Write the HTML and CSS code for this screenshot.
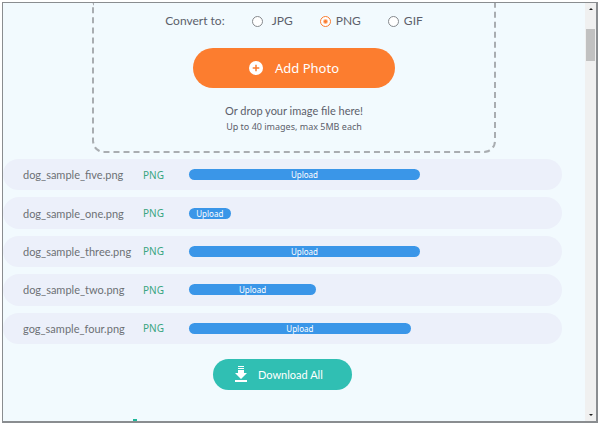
FILE: index.html
```html
<!DOCTYPE html>
<html lang="en">
<head>
<meta charset="UTF-8">
<meta name="viewport" content="width=device-width, initial-scale=1.0">
<title>Image Converter</title>
<link rel="stylesheet" href="styles.css">
</head>
<body>

<div class="window">
    <main class="page">
        <form class="drop-zone">
            <fieldset class="formats">
                <legend class="formats-title">Convert to:</legend>
                <label class="format format-wide"><input type="radio" name="format" value="jpg">JPG</label>
                <label class="format"><input type="radio" name="format" value="png" checked>PNG</label>
                <label class="format"><input type="radio" name="format" value="gif">GIF</label>
            </fieldset>
            <button type="button" class="btn-add">
                <svg width="14" height="14" viewBox="0 0 14 14" aria-hidden="true">
                    <circle cx="7" cy="7" r="7" fill="#fff"/>
                    <path d="M7 3.7v6.6M3.7 7h6.6" stroke="#fc7d2f" stroke-width="1.5"/>
                </svg>
                Add Photo
            </button>
            <p class="drop-text">Or drop your image file here!</p>
            <p class="drop-limit">Up to 40 images, max 5MB each</p>
        </form>

        <section class="results">
            <ul class="files">
                <li class="file">
                    <span class="file-name">dog_sample_five.png</span>
                    <span class="file-type">PNG</span>
                    <div class="track"><div class="bar" style="width: 100%">Upload</div></div>
                </li>
                <li class="file">
                    <span class="file-name">dog_sample_one.png</span>
                    <span class="file-type">PNG</span>
                    <div class="track"><div class="bar" style="width: 18%">Upload</div></div>
                </li>
                <li class="file">
                    <span class="file-name">dog_sample_three.png</span>
                    <span class="file-type">PNG</span>
                    <div class="track"><div class="bar" style="width: 100%">Upload</div></div>
                </li>
                <li class="file">
                    <span class="file-name">dog_sample_two.png</span>
                    <span class="file-type">PNG</span>
                    <div class="track"><div class="bar" style="width: 55%">Upload</div></div>
                </li>
                <li class="file">
                    <span class="file-name">gog_sample_four.png</span>
                    <span class="file-type">PNG</span>
                    <div class="track"><div class="bar" style="width: 96%">Upload</div></div>
                </li>
            </ul>

            <button type="button" class="btn-download">
                <svg width="12" height="17" viewBox="0 0 12 17" aria-hidden="true">
                    <path d="M3 0h6v1H3zM3 2h6v1H3zM3 4h6v3h3l-6 6-6-6h3zM0 14h12v2H0z" fill="#fff"/>
                </svg>
                Download All
            </button>
        </section>

        <div class="next-section"></div>
    </main>

    <div class="scrollbar">
        <button type="button" class="scroll-btn" aria-label="Scroll up">
            <svg width="4" height="2" viewBox="0 0 4 2"><path d="M2 0l2 2H0z" fill="#222"/></svg>
        </button>
        <div class="scroll-thumb"></div>
        <button type="button" class="scroll-btn scroll-down" aria-label="Scroll down">
            <svg width="4" height="2" viewBox="0 0 4 2"><path d="M2 2l2-2H0z" fill="#222"/></svg>
        </button>
    </div>
</div>

</body>
</html>
```
FILE: styles.css
```css
* {
    box-sizing: border-box;
}
body {
    margin: 0;
    padding: 2px;
    height: 100vh;
    background-color: #fff;
    font-family: Lato, "Noto Sans", sans-serif;
    color: #5c5f6b;
}
button {
    border: none;
    padding: 0;
    font-family: inherit;
    color: #fff;
    cursor: pointer;
}
.window {
    display: flex;
    height: 100%;
    border: 1px solid #8a8d90;
    border-right: 2px solid #8a8d90;
    border-bottom: 2px solid #8a8d90;
    background-color: #f2fafe;
}
.page {
    flex: 1;
    display: flex;
    flex-direction: column;
    align-items: center;
}
/* the top edge of the drop area is scrolled out of view */
.drop-zone {
    display: flex;
    flex-direction: column;
    align-items: center;
    width: 69%;
    min-width: 404px;
    height: 150px;
    padding-top: 10px;
    border: 2px dashed #a9adb1;
    border-top: none;
    border-radius: 0 0 12px 12px;
}
.formats {
    display: flex;
    align-items: center;
    margin: 0;
    padding: 0;
    border: none;
    font-size: 12px;
    line-height: 16px;
}
.formats-title {
    float: left;
    padding: 0;
    margin-right: 27px;
}
.format {
    display: flex;
    align-items: center;
    gap: 5px;
    margin-right: 27px;
}
.format:last-child {
    margin-right: 0;
}
.format-wide {
    gap: 9px;
}
.format input {
    appearance: none;
    width: 11px;
    height: 11px;
    margin: 0;
    border: 1px solid #85898d;
    border-radius: 50%;
    background-color: #fff;
}
.format input:checked {
    border-color: #fc7d2f;
    background: radial-gradient(circle, #fc7d2f 1px, #fff 3px);
}
.btn-add {
    display: flex;
    align-items: center;
    justify-content: center;
    gap: 12px;
    width: 202px;
    height: 40px;
    margin-top: 19px;
    border-radius: 20px;
    background-color: #fc7d2f;
    font-family: "Noto Sans", sans-serif;
    font-size: 13px;
}
.drop-text {
    margin: 15px 0 0;
    font-size: 11px;
    line-height: 16px;
}
.drop-limit {
    margin: 0;
    font-family: "Noto Sans", sans-serif;
    font-size: 9px;
    line-height: 16px;
}
.results {
    align-self: stretch;
    display: flex;
    flex-direction: column;
    align-items: center;
    margin: 6px 23px 0 0;
}
.files {
    align-self: stretch;
    display: grid;
    grid-auto-rows: 1fr;
    gap: 7px;
    min-height: 185px;
    margin: 0;
    padding: 0;
    list-style: none;
}
.file {
    display: grid;
    grid-template-columns: 120px 46px 1fr;
    align-items: center;
    padding-left: 20px;
    border-radius: 16px;
    background-color: #ecf0fa;
}
.file-name {
    font-size: 11px;
    color: #6d7075;
}
.file-type {
    font-family: "Noto Sans", sans-serif;
    font-size: 10px;
    color: #38a580;
}
.track {
    width: 231px;
}
.bar {
    height: 11px;
    border-radius: 6px;
    background-color: #3a96e8;
    font-family: "Noto Sans", sans-serif;
    font-size: 8px;
    line-height: 11px;
    text-align: center;
    color: #fff;
}
.btn-download {
    display: flex;
    align-items: center;
    gap: 11px;
    width: 139px;
    height: 31px;
    margin-top: 15px;
    padding-left: 22px;
    border-radius: 16px;
    background-color: #30bfb3;
    font-size: 11px;
}
/* the first mark of the section below the fold */
.next-section {
    width: 4px;
    height: 2px;
    margin: auto auto 0 130px;
    background-color: #1fb89a;
}
.scrollbar {
    display: flex;
    flex-direction: column;
    align-items: center;
    width: 11px;
    background-color: #f0f0f0;
}
.scroll-btn {
    display: flex;
    align-items: center;
    justify-content: center;
    width: 11px;
    height: 12px;
    background: none;
}
.scroll-thumb {
    width: 9px;
    height: 32px;
    margin-top: 14px;
    background-color: #c1c1c1;
}
.scroll-down {
    margin-top: auto;
}
```
